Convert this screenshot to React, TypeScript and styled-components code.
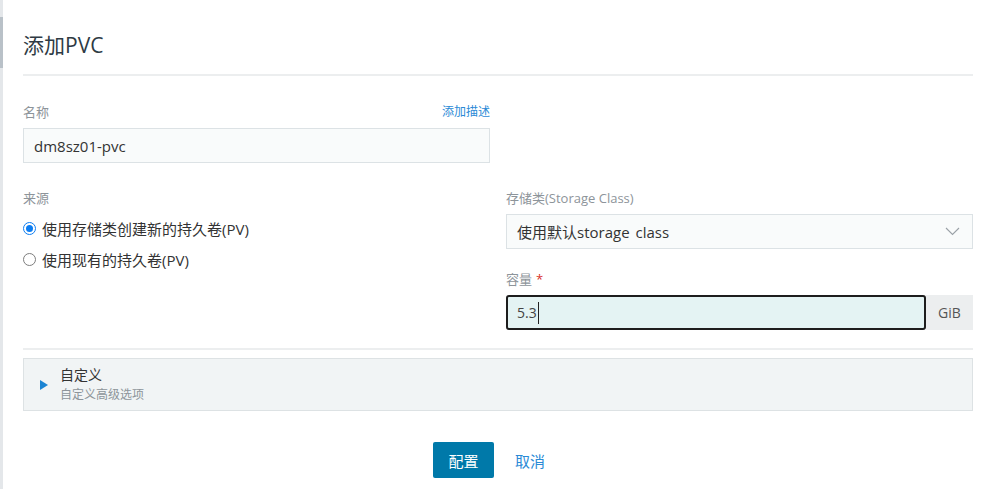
import React from "react";
import styled, { createGlobalStyle } from "styled-components";

const GlobalStyle = createGlobalStyle`
  html, body { margin: 0; padding: 0; background: #fff; }
  body {
    font-family: "Open Sans", "Noto Sans CJK SC", sans-serif;
    color: #333;
    -webkit-font-smoothing: antialiased;
  }
  * { box-sizing: border-box; }
`;

const Page = styled.div`
  display: flex;
  width: 984px;
  height: 489px;
  overflow: hidden;
`;

const Rail = styled.div`
  width: 3px;
  flex: none;
  background: #e4e7ea;
  display: flex;
  flex-direction: column;
  padding-top: 17px;
`;

const RailThumb = styled.div`
  height: 51px;
  background: #b9c1c8;
`;

const Main = styled.div`
  flex: 1;
  padding: 0 11px 0 20px;
  display: flex;
  flex-direction: column;
`;

const Header = styled.div`
  padding: 31px 0 15px;
`;

const Title = styled.h1`
  margin: 0;
  font-size: 21px;
  line-height: 28px;
  font-weight: 400;
  color: #2e3a44;
`;

const Divider = styled.div<{ $top?: number }>`
  height: 2px;
  background: #eceeef;
  margin-top: ${(p) => p.$top ?? 0}px;
`;

const Form = styled.div`
  display: grid;
  grid-template-columns: 467px 467px;
  column-gap: 16px;
  margin-top: 28px;
`;

const Column = styled.div`
  display: flex;
  flex-direction: column;
`;

const Field = styled.div<{ $top?: number }>`
  display: flex;
  flex-direction: column;
  margin-top: ${(p) => p.$top ?? 0}px;
`;

const LabelRow = styled.div`
  display: flex;
  justify-content: space-between;
  align-items: center;
  height: 16px;
  margin-bottom: 8px;
`;

const Label = styled.span`
  font-size: 13px;
  line-height: 16px;
  color: #8d949a;
`;

const Required = styled.span`
  color: #d9302a;
  margin-left: 4px;
`;

const TextLink = styled.a`
  font-size: 12px;
  line-height: 16px;
  color: #2b8ad6;
  text-decoration: none;
  cursor: pointer;
`;

const TextBox = styled.div`
  height: 35px;
  border: 1px solid #dce2e5;
  background: #f9fbfb;
  display: flex;
  align-items: center;
  padding: 0 10px;
  font-size: 15px;
  color: #333;
`;

const SelectBox = styled(TextBox)`
  justify-content: space-between;
  padding-right: 12px;
  word-spacing: 2px;
`;

const RadioList = styled.div`
  display: flex;
  flex-direction: column;
  gap: 11px;
  margin-top: 4px;
`;

const RadioRow = styled.label`
  display: flex;
  align-items: center;
  height: 20px;
  font-size: 15px;
  color: #333;
  gap: 6px;
`;

const RadioDot = styled.span<{ $checked?: boolean }>`
  width: 13px;
  height: 13px;
  border-radius: 50%;
  flex: none;
  background: #fff;
  border: ${(p) => (p.$checked ? "1.5px solid #0d7df1" : "1px solid #7d7d7d")};
  display: flex;
  align-items: center;
  justify-content: center;
  &::after {
    content: "";
    display: ${(p) => (p.$checked ? "block" : "none")};
    width: 7px;
    height: 7px;
    border-radius: 50%;
    background: #0d7df1;
  }
`;

const InputGroup = styled.div`
  display: flex;
  height: 35px;
`;

const FocusInput = styled.div`
  flex: 1;
  border: 2px solid #1d1d1d;
  border-radius: 3px;
  background: #e4f3f3;
  display: flex;
  align-items: center;
  padding: 0 9px;
  font-size: 14px;
  color: #444;
`;

const Caret = styled.span`
  display: inline-block;
  width: 1px;
  height: 22px;
  background: #222;
  margin-left: 1px;
`;

const Addon = styled.div`
  width: 47px;
  flex: none;
  background: #eceeef;
  display: flex;
  align-items: center;
  justify-content: center;
  font-size: 14px;
  color: #555;
`;

const Collapse = styled.div`
  margin-top: 8px;
  height: 53px;
  border: 1px solid #dde2e4;
  background: #f1f4f5;
  display: flex;
  align-items: center;
  padding-left: 16px;
  gap: 12px;
`;

const CollapseText = styled.div`
  display: flex;
  flex-direction: column;
`;

const CollapseTitle = styled.span`
  font-size: 14px;
  line-height: 20px;
  color: #333;
`;

const CollapseSub = styled.span`
  font-size: 12px;
  line-height: 20px;
  color: #8d949a;
`;

const Actions = styled.div`
  display: flex;
  justify-content: center;
  margin-top: 31px;
  padding-left: 2px;
`;

const PrimaryButton = styled.button`
  width: 61px;
  height: 36px;
  border: none;
  border-radius: 2px;
  background: #0079a9;
  color: #fff;
  font-family: inherit;
  font-size: 15px;
  cursor: pointer;
`;

const LinkButton = styled.button`
  height: 36px;
  border: none;
  background: transparent;
  color: #2b8ad6;
  font-family: inherit;
  font-size: 15px;
  padding: 0 20px;
  margin-left: 1px;
  cursor: pointer;
`;

const Chevron = () => (
  <svg width="15" height="9" viewBox="0 0 15 9" fill="none">
    <path d="M1 1l6.5 6.5L14 1" stroke="#9aa1a7" strokeWidth="1.1" />
  </svg>
);

const Triangle = () => (
  <svg width="8" height="10" viewBox="0 0 8 10">
    <path d="M0 0L8 5L0 10Z" fill="#1b84d3" />
  </svg>
);

export default function App() {
  return (
    <>
      <GlobalStyle />
      <Page>
        <Rail>
          <RailThumb />
        </Rail>
        <Main>
          <Header>
            <Title>添加PVC</Title>
          </Header>
          <Divider />
          <Form>
            <Column>
              <Field>
                <LabelRow>
                  <Label>名称</Label>
                  <TextLink>添加描述</TextLink>
                </LabelRow>
                <TextBox>dm8sz01-pvc</TextBox>
              </Field>
              <Field $top={27}>
                <LabelRow>
                  <Label>来源</Label>
                </LabelRow>
                <RadioList>
                  <RadioRow>
                    <RadioDot $checked />
                    使用存储类创建新的持久卷(PV)
                  </RadioRow>
                  <RadioRow>
                    <RadioDot />
                    使用现有的持久卷(PV)
                  </RadioRow>
                </RadioList>
              </Field>
            </Column>
            <Column>
              <Field $top={86}>
                <LabelRow>
                  <Label>存储类(Storage Class)</Label>
                </LabelRow>
                <SelectBox>
                  <span>使用默认storage class</span>
                  <Chevron />
                </SelectBox>
              </Field>
              <Field $top={22}>
                <LabelRow>
                  <Label>
                    容量<Required>*</Required>
                  </Label>
                </LabelRow>
                <InputGroup>
                  <FocusInput>
                    5.3
                    <Caret />
                  </FocusInput>
                  <Addon>GiB</Addon>
                </InputGroup>
              </Field>
            </Column>
          </Form>
          <Divider $top={18} />
          <Collapse>
            <Triangle />
            <CollapseText>
              <CollapseTitle>自定义</CollapseTitle>
              <CollapseSub>自定义高级选项</CollapseSub>
            </CollapseText>
          </Collapse>
          <Actions>
            <PrimaryButton>配置</PrimaryButton>
            <LinkButton>取消</LinkButton>
          </Actions>
        </Main>
      </Page>
    </>
  );
}
